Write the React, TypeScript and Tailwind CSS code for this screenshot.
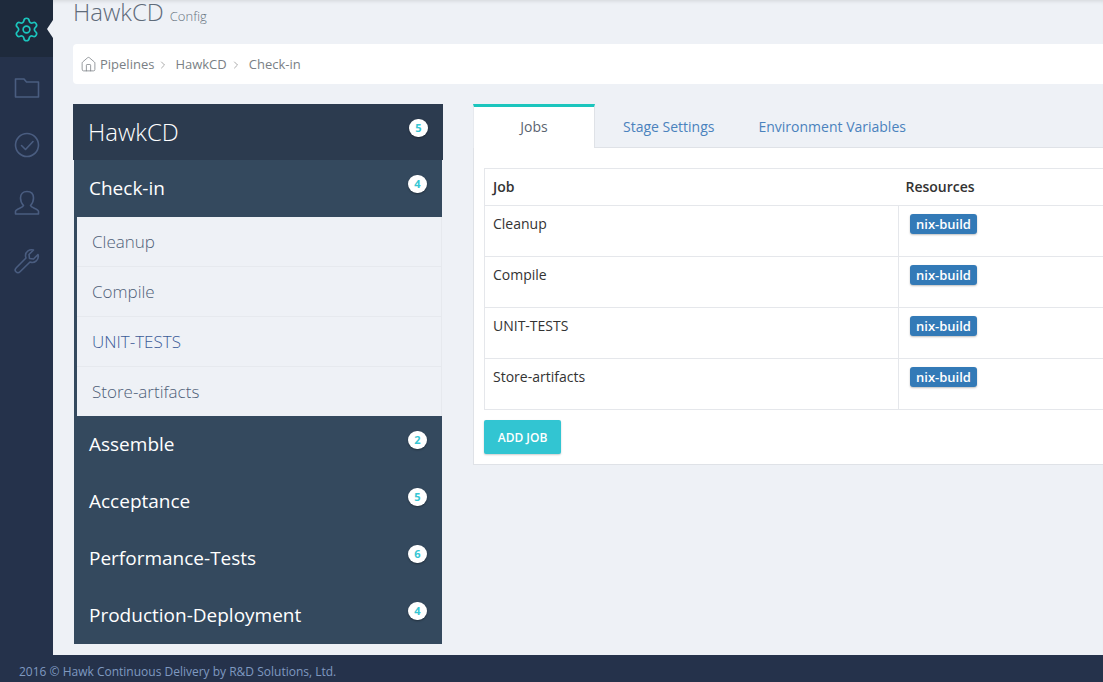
import React from "react";
import { ChevronRight, Home, Settings } from "lucide-react";

const FONT = { fontFamily: '"Open Sans", sans-serif' };

const jobs = ["Cleanup", "Compile", "UNIT-TESTS", "Store-artifacts"];
const stages = [
  { name: "Assemble", count: 2 },
  { name: "Acceptance", count: 5 },
  { name: "Performance-Tests", count: 6 },
  { name: "Production-Deployment", count: 4 },
];

function Badge({ n }: { n: number }) {
  return (
    <span className="absolute right-[15px] top-[15px] flex h-[18px] w-[19px] items-center justify-center rounded-full bg-white text-[11px] font-bold text-[#36c6d3] shadow-[0_1px_2px_rgba(0,0,0,0.35)]">
      {n}
    </span>
  );
}

function RailIcon({ children }: { children: React.ReactNode }) {
  return (
    <div className="flex h-[58px] items-center justify-center">
      <svg width="26" height="26" viewBox="0 0 26 26" fill="none" stroke="#4a5d80" strokeWidth="1.6" strokeLinejoin="round" strokeLinecap="round">
        {children}
      </svg>
    </div>
  );
}

export default function App() {
  return (
    <div style={FONT} className="flex h-[682px] w-[1103px] flex-col overflow-hidden bg-[#eef1f6]">
      <div className="flex min-h-0 flex-1">
        {/* icon rail */}
        <div className="w-[53px] shrink-0 bg-[#25324b]">
          <div className="relative mb-px flex h-[57px] items-center justify-center bg-[#1e2a3c]">
            <Settings size={27} strokeWidth={1.5} className="mt-[1px] -ml-px text-[#1bc5bd]" />
            <span className="absolute right-0 top-[20px] h-0 w-0 border-y-[9px] border-r-[6px] border-y-transparent border-r-[#eef1f6]" />
          </div>
          <RailIcon>
            <path d="M1.5 5 H10 L12.5 8 H24.5 V23 H1.5 Z" />
          </RailIcon>
          <RailIcon>
            <circle cx="13" cy="13" r="11.5" />
            <path d="M7.5 13.5 L11.5 17.5 L19 9.5" />
          </RailIcon>
          <RailIcon>
            <path d="M1.5 24 V21.5 C1.5 18.5 9 18 9.5 15.5 C7.5 13.5 6.5 11 6.5 8 C6.5 4 9 1.5 13 1.5 C17 1.5 19.5 4 19.5 8 C19.5 11 18.5 13.5 16.5 15.5 C17 18 24.5 18.5 24.5 21.5 V24 Z" />
          </RailIcon>
          <RailIcon>
            <path d="M24 6.5 L19.5 11 L15.5 10.5 L15 6.5 L19.5 2 C15.5 0.8 11.5 3.5 11.5 7.5 C11.5 8.5 11.7 9.3 12 10 L2.3 19.7 C0.8 21.2 1 22.8 2 23.8 C3 24.8 4.8 25 6.3 23.5 L16 14 C20.5 15.8 25.5 11.5 24 6.5 Z" />
          </RailIcon>
        </div>

        {/* main content */}
        <div className="min-w-0 flex-1 pl-5 shadow-[inset_0_4px_4px_-3px_rgba(0,0,0,0.12)]">
          <div className="flex h-[44px] items-baseline whitespace-nowrap">
            <span className="text-[24px] font-light leading-[24px] text-[#5f6b7a]">HawkCD</span>
            <span className="ml-[6px] text-[13px] leading-[24px] font-light text-[#667280]">Config</span>
          </div>

          <div className="flex h-10 items-center rounded-l-[4px] bg-white pt-px pl-[7px] text-[13px] text-[#7a7f85]">
            <Home size={17} strokeWidth={1.1} className="mr-[3px]" />
            <span>Pipelines</span>
            <ChevronRight size={12} strokeWidth={1.4} className="ml-[3px] mr-[6px] text-[#888]" />
            <span>HawkCD</span>
            <ChevronRight size={12} strokeWidth={1.4} className="ml-[3px] mr-[7px] text-[#888]" />
            <span>Check-in</span>
          </div>

          <div className="mt-5 flex items-start gap-[30px]">
            {/* stage menu */}
            <div className="w-[370px] shrink-0">
              <div className="relative flex h-14 items-center bg-[#2c3b4f] pl-[15px] text-[24px] font-light text-white">
                HawkCD
                <span className="absolute right-[15px] top-[15px] flex h-[18px] w-[19px] items-center justify-center rounded-full bg-white text-[11px] font-bold text-[#36c6d3] shadow-[0_1px_2px_rgba(0,0,0,0.35)]">5</span>
              </div>
              <div className="mx-px bg-[#34495e]">
                <div className="relative flex h-[57px] items-center pl-[15px] text-[19px] text-white">
                  Check-in
                  <Badge n={4} />
                </div>
                <div className="border-l-[3px] border-[#34495e] bg-[#eef1f6]">
                  {jobs.map((job, i) => (
                    <div
                      key={job}
                      className={`flex items-center border-r border-[#e6e9ee] pl-[15px] text-[17px] font-light ${i < 3 ? "h-[50px] border-b" : "h-[49px]"} ${job === "UNIT-TESTS" ? "text-[#3c5c98]" : "text-[#4f5f78]"}`}
                    >
                      {job}
                    </div>
                  ))}
                </div>
                {stages.map((s) => (
                  <div key={s.name} className="relative flex h-[57px] items-center pl-[15px] text-[19px] text-white">
                    {s.name}
                    <Badge n={s.count} />
                  </div>
                ))}
              </div>
            </div>

            {/* job tabs */}
            <div className="w-[720px] shrink-0">
              <div className="flex h-11 border-b border-[#dfe2e7] text-[14px]">
                <div className="-mb-px flex h-11 w-[122px] items-center justify-center border-t-[3px] border-r border-l border-t-[#1bc5bd] border-r-[#dfe2e7] border-l-[#e6e9ee] bg-white pb-[2px] text-[#5b6470]">
                  Jobs
                </div>
                <div className="flex items-center pt-px pl-[28px] text-[#4a82bd]">Stage Settings</div>
                <div className="flex items-center pt-px pl-[44px] text-[#4a82bd]">Environment Variables</div>
              </div>
              <div className="h-[317px] border-x border-b border-[#dfe2e7] bg-white pt-5 pl-[10px]">
                <table className="w-[700px] table-fixed border-collapse text-[14px] text-[#333]">
                  <colgroup>
                    <col className="w-[414px]" />
                    <col />
                  </colgroup>
                  <thead>
                    <tr className="h-[37px] border border-[#e5e7eb] text-left font-semibold">
                      <th className="pb-[2px] pl-2 font-semibold">Job</th>
                      <th className="pb-[2px] pl-[7px] font-semibold">Resources</th>
                    </tr>
                  </thead>
                  <tbody>
                    {jobs.map((job) => (
                      <tr key={job} className="h-[51px] border border-[#e5e7eb]">
                        <td className="border-r border-[#e5e7eb] pt-[7px] pl-2 align-top">{job}</td>
                        <td className="pt-[8px] pl-[11px] align-top">
                          <span className="flex h-[20px] w-[67px] items-center justify-center rounded-[3px] bg-[#337ab7] pt-[2px] text-[13px] font-semibold text-white shadow-[0_1px_2px_rgba(0,0,0,0.25)]">
                            nix-build
                          </span>
                        </td>
                      </tr>
                    ))}
                  </tbody>
                </table>
                <button className="mt-[10px] flex h-[34px] w-[77px] items-center justify-center rounded-[2px] bg-[#32c5d2] pt-[2px] text-[12px] font-semibold text-white shadow-[0_1px_2px_rgba(0,0,0,0.2)]">
                  ADD JOB
                </button>
              </div>
            </div>
          </div>
        </div>
      </div>

      {/* footer */}
      <div className="flex h-[27px] shrink-0 items-center bg-[#25324b] pt-[6px] pl-[19px] text-[12px] text-[#7f99c0]">
        2016 © Hawk Continuous Delivery by R&amp;D Solutions, Ltd.
      </div>
    </div>
  );
}
